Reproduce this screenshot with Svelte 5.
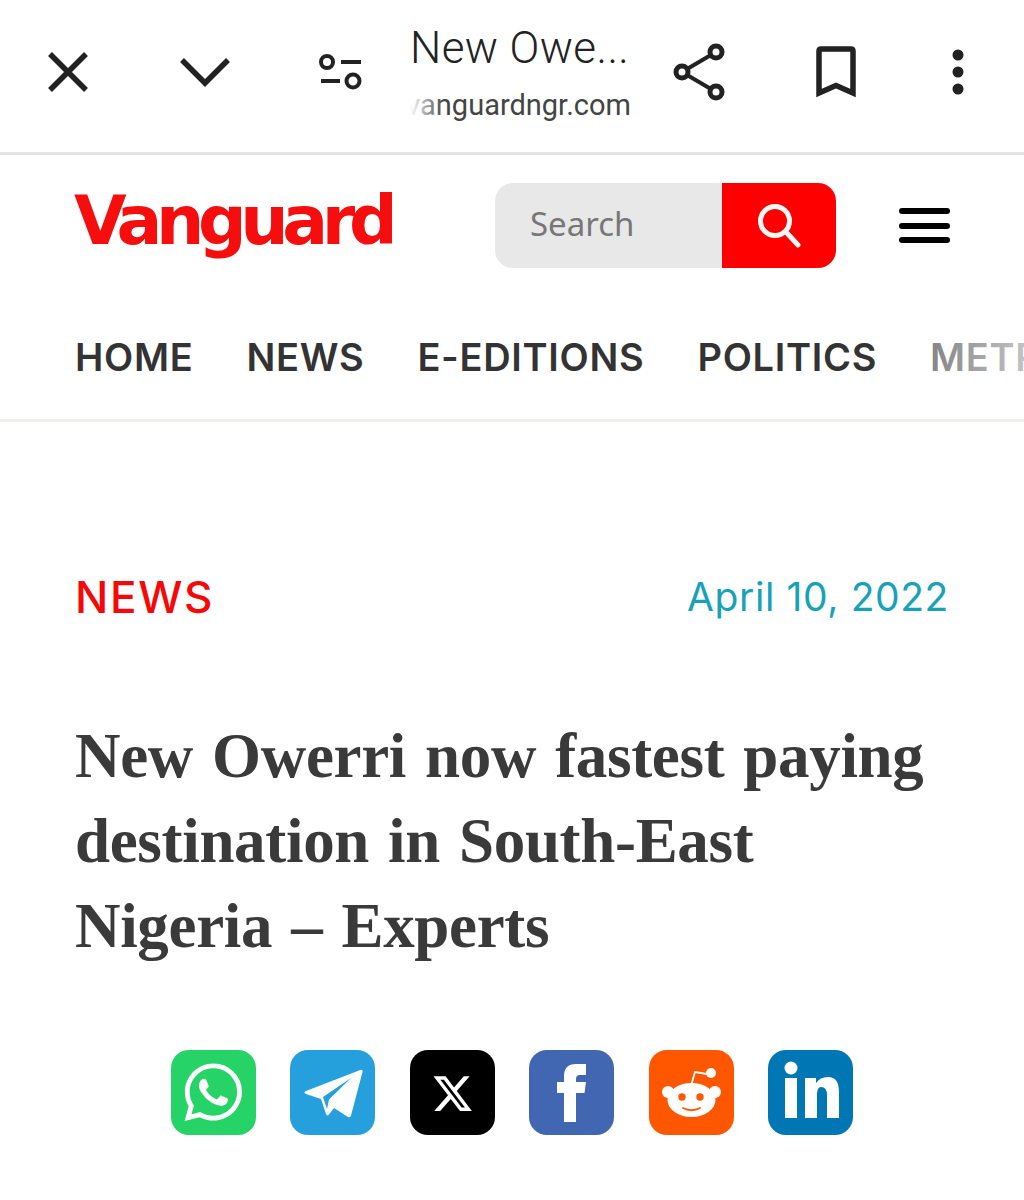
<script>
	const navItems = ['HOME', 'NEWS', 'E-EDITIONS', 'POLITICS', 'METRO', 'BUSINESS'];
</script>

<div class="page">
	<header class="toolbar">
		<button class="tool" aria-label="Close">
			<svg width="42" height="42" viewBox="0 0 42 42"><path d="M3 3 L39 39 M39 3 L3 39" class="line" /></svg>
		</button>
		<button class="tool" aria-label="Minimise">
			<svg width="52" height="32" viewBox="0 0 52 32"><path d="M3 4 L26 27 L49 4" class="line" /></svg>
		</button>
		<button class="tool" aria-label="Page settings">
			<svg width="44" height="36" viewBox="0 0 44 36">
				<circle cx="8" cy="8" r="6" class="thin" />
				<path d="M22 8 H42 M2 27 H21" class="thin" />
				<circle cx="34" cy="27" r="6.5" class="thin" />
			</svg>
		</button>
		<div class="address">
			<div class="page-title">New Owe...</div>
			<div class="page-url"><span>vanguardngr.com</span></div>
		</div>
		<button class="tool" aria-label="Share">
			<svg width="54" height="60" viewBox="0 0 54 60">
				<path d="M10 30 L44 10 M10 30 L44 50" class="thin" />
				<circle cx="44" cy="10" r="6" class="ring" />
				<circle cx="10" cy="30" r="6" class="ring" />
				<circle cx="44" cy="50" r="6" class="ring" />
			</svg>
		</button>
		<button class="tool" aria-label="Bookmark">
			<svg width="40" height="52" viewBox="0 0 40 52"><path d="M3 47 V5 Q3 3 5 3 H35 Q37 3 37 5 V47 L20 39.500 Z" class="line" /></svg>
		</button>
		<button class="tool last" aria-label="More">
			<svg width="12" height="46" viewBox="0 0 12 46" fill="#222">
				<circle cx="6" cy="6" r="5.500" />
				<circle cx="6" cy="23" r="5.500" />
				<circle cx="6" cy="40" r="5.500" />
			</svg>
		</button>
	</header>

	<div class="masthead">
		<div class="logo">Vanguard</div>
		<div class="search">
			<div class="search-field">Search</div>
			<button class="search-btn" aria-label="Search">
				<svg width="44" height="46" viewBox="0 0 44 46" fill="none" stroke="#fff8f4" stroke-linecap="round">
					<circle cx="18" cy="18" r="14.500" stroke-width="5" />
					<path d="M29 29 L41 42" stroke-width="5" />
				</svg>
			</button>
		</div>
		<button class="burger" aria-label="Menu"><span></span><span></span><span></span></button>
	</div>

	<nav class="nav">
		{#each navItems as item}
			<span>{item}</span>
		{/each}
		<div class="nav-fade"></div>
	</nav>

	<main class="article">
		<div class="meta">
			<span class="category">NEWS</span>
			<span class="date">April 10, 2022</span>
		</div>
		<h1>New Owerri now fastest paying destination in South-East Nigeria – Experts</h1>

		<div class="share">
			<div class="tile whatsapp">
				<svg viewBox="0 0 85 85" width="85" height="85">
					<g transform="translate(13.500 13.500) scale(2.400)" fill="#fff">
						<path d="M17.472 14.382c-.297-.149-1.758-.867-2.03-.967-.273-.099-.471-.148-.67.15-.197.297-.767.966-.94 1.164-.173.199-.347.223-.644.075-.297-.15-1.255-.463-2.39-1.475-.883-.788-1.48-1.761-1.653-2.059-.173-.297-.018-.458.13-.606.134-.133.298-.347.446-.52.149-.174.198-.298.298-.497.099-.198.05-.371-.025-.52-.075-.149-.669-1.612-.916-2.207-.242-.579-.487-.5-.669-.51-.173-.008-.371-.01-.57-.01-.198 0-.52.074-.792.372-.272.297-1.04 1.016-1.04 2.479 0 1.462 1.065 2.875 1.213 3.074.149.198 2.096 3.2 5.077 4.487.709.306 1.262.489 1.694.625.712.227 1.36.195 1.871.118.571-.085 1.758-.719 2.006-1.413.248-.694.248-1.289.173-1.413-.074-.124-.272-.198-.57-.347m-5.421 7.403h-.004a9.87 9.87 0 01-5.031-1.378l-.361-.214-3.741.982.998-3.648-.235-.374a9.86 9.86 0 01-1.51-5.26c.001-5.45 4.436-9.884 9.888-9.884 2.64 0 5.122 1.03 6.988 2.898a9.825 9.825 0 012.893 6.994c-.003 5.45-4.437 9.884-9.885 9.884m8.413-18.297A11.815 11.815 0 0012.05 0C5.495 0 .16 5.335.157 11.892c0 2.096.547 4.142 1.588 5.945L.057 24l6.305-1.654a11.882 11.882 0 005.683 1.448h.005c6.554 0 11.89-5.335 11.893-11.893a11.821 11.821 0 00-3.48-8.413Z" />
					</g>
				</svg>
			</div>
			<div class="tile telegram">
				<svg viewBox="0 0 85 85" width="85" height="85">
					<path d="M72 20 Q70.500 19.500 69 20.500 L16 41 Q13 42.500 16 44 L31 49 L36 64 Q37 66.500 39 64.500 L44 58 L58 67 Q60.500 68 61 65.500 L72.500 22 Q73 20.500 72 20 Z" fill="#fff" />
					<path d="M61 28 L33 47 L37 59 L39 49.500 Z" fill="#26a0dc" />
				</svg>
			</div>
			<div class="tile x">
				<svg viewBox="0 0 85 85" width="85" height="85">
					<g transform="translate(23.500 24.500) scale(1.600)" fill="#fff">
						<path d="M18.901 1.153h3.68l-8.04 9.19L24 22.846h-7.406l-5.8-7.584-6.638 7.584H.474l8.6-9.83L0 1.154h7.594l5.243 6.932ZM17.61 20.644h2.039L6.486 3.24H4.298Z" />
					</g>
				</svg>
			</div>
			<div class="tile facebook">
				<svg viewBox="0 0 85 85" width="85" height="85">
					<path d="M35 72 V43 H28 V32 H35 V26 Q35 14 47 14 H57 V25 H51 Q47 25 47 29 V32 H57 L55.500 43 H47 V72 Z" fill="#fff" />
				</svg>
			</div>
			<div class="tile reddit">
				<svg viewBox="0 0 85 85" width="85" height="85">
					<path d="M42.500 34 L46 22 L58 24" fill="none" stroke="#fff" stroke-width="1.800" />
					<circle cx="62" cy="23" r="5" fill="#fff" />
					<circle cx="19" cy="42" r="6" fill="#fff" />
					<circle cx="66" cy="42" r="6" fill="#fff" />
					<ellipse cx="42.500" cy="50" rx="24" ry="17" fill="#fff" />
					<circle cx="33" cy="47" r="3.700" fill="#ff5700" />
					<circle cx="51" cy="47" r="3.700" fill="#ff5700" />
					<path d="M34 58 Q42.500 62.500 51 58" fill="none" stroke="#ff5700" stroke-width="1.800" stroke-linecap="round" />
				</svg>
			</div>
			<div class="tile linkedin">
				<svg viewBox="0 0 85 85" width="85" height="85" fill="#fff">
					<circle cx="23" cy="18" r="6.500" />
					<path d="M17 28 H29 V68 H17 Z" />
					<path d="M37 28 H48 V33 Q52 27 60 27 Q71 27 71 42 V68 H59 V45 Q59 37 53 37 Q49 37 49 45 V68 H37 Z" />
				</svg>
			</div>
		</div>
	</main>
</div>

<style>
	:global(body) {
		background: #fff;
	}

	.page {
		height: 1200px;
		overflow: hidden;
		background: #fff;
		font-family: 'Noto Sans', sans-serif;
	}

	button {
		padding: 0;
		border: 0;
		background: none;
		display: flex;
		align-items: center;
		justify-content: center;
	}

	.toolbar {
		display: flex;
		align-items: center;
		height: 144px;
		padding-bottom: 8px;
		border-bottom: 3px solid #e4e4e4;
		box-sizing: content-box;
	}

	.tool {
		flex: 0 0 136.500px;
		height: 100%;
	}

	.tool.last {
		flex-basis: 106px;
		margin-left: 1px;
	}

	.line {
		fill: none;
		stroke: #222;
		stroke-width: 5.500;
	}

	.thin {
		fill: none;
		stroke: #222;
		stroke-width: 4;
	}

	.ring {
		fill: #fff;
		stroke: #222;
		stroke-width: 5;
	}

	.address {
		flex: 0 0 221px;
		min-width: 0;
		margin-left: 0.500px;
		font-family: Roboto, sans-serif;
	}

	.page-title {
		margin-top: 2px;
		font-size: 44px;
		font-weight: 300;
		letter-spacing: 0.400px;
		line-height: 50px;
		color: #222;
		white-space: nowrap;
	}

	.page-url {
		position: relative;
		overflow: hidden;
		display: flex;
		justify-content: flex-end;
		margin-top: 13px;
		font-size: 29px;
		line-height: 38px;
		color: #444;
		white-space: nowrap;
	}

	.page-url::before {
		content: '';
		position: absolute;
		left: 0;
		top: 0;
		bottom: 0;
		width: 34px;
		background: linear-gradient(to right, #fff, rgb(255 255 255 / 0));
	}

	.masthead {
		display: flex;
		align-items: center;
		height: 138px;
		padding: 0 74px;
	}

	.logo {
		flex: 0 0 421px;
		margin-top: -6px;
		font-family: 'DejaVu Sans', sans-serif;
		font-weight: 700;
		font-size: 68px;
		line-height: 90px;
		letter-spacing: -6.400px;
		color: #f60d0d;
	}

	.search {
		display: flex;
		height: 85px;
		width: 341px;
		border-radius: 18px;
		overflow: hidden;
		margin-top: 3px;
	}

	.search-field {
		flex: 1;
		display: flex;
		align-items: center;
		padding: 0 0 4px 35px;
		background: #e8e8e8;
		color: #777;
		font-size: 33px;
	}

	.search-btn {
		flex: 0 0 114px;
		background: #ff0000;
	}

	.burger {
		flex-direction: column;
		gap: 8.500px;
		margin-left: 63px;
		margin-top: 3px;
	}

	.burger span {
		display: block;
		width: 51px;
		height: 6px;
		border-radius: 3px;
		background: #000;
	}

	.nav {
		position: relative;
		display: flex;
		align-items: center;
		gap: 53px;
		height: 124px;
		padding: 2px 0 0 75px;
		border-bottom: 3px solid #f3eeee;
		overflow: hidden;
		font-family: Inter, sans-serif;
		font-size: 38px;
		font-weight: 600;
		letter-spacing: 0.700px;
		color: #333;
		white-space: nowrap;
	}

	.nav-fade {
		position: absolute;
		right: 0;
		top: 0;
		bottom: 0;
		width: 110px;
		background: linear-gradient(to right, rgb(255 255 255 / 0.35), rgb(255 255 255 / 0.7));
	}

	.article {
		padding: 0 75px;
	}

	.meta {
		display: flex;
		align-items: center;
		justify-content: space-between;
		margin-top: 142px;
		height: 64px;
		font-family: Inter, sans-serif;
	}

	.category {
		color: #f60808;
		font-size: 44px;
		font-weight: 500;
		letter-spacing: 1.700px;
		padding-top: 2px;
	}

	.date {
		color: #17a2b8;
		font-size: 39px;
		letter-spacing: 0.600px;
	}

	h1 {
		margin: 86px 0 0;
		font-family: 'Liberation Serif', serif;
		font-weight: 700;
		font-size: 63px;
		line-height: 85px;
		letter-spacing: -0.320px;
		word-spacing: 3.600px;
		color: #3a3a3a;
	}

	.share {
		display: flex;
		gap: 34.500px;
		margin-top: 81px;
		padding-left: 95.500px;
	}

	.tile {
		flex: 0 0 85px;
		height: 85px;
		border-radius: 18px;
		overflow: hidden;
	}

	.tile svg {
		display: block;
	}

	.whatsapp { background: #25d366; }
	.telegram { background: #26a0dc; }
	.x { background: #000; }
	.facebook { background: #4267b2; }
	.reddit { background: #ff5700; }
	.linkedin { background: #0077b5; }
</style>
